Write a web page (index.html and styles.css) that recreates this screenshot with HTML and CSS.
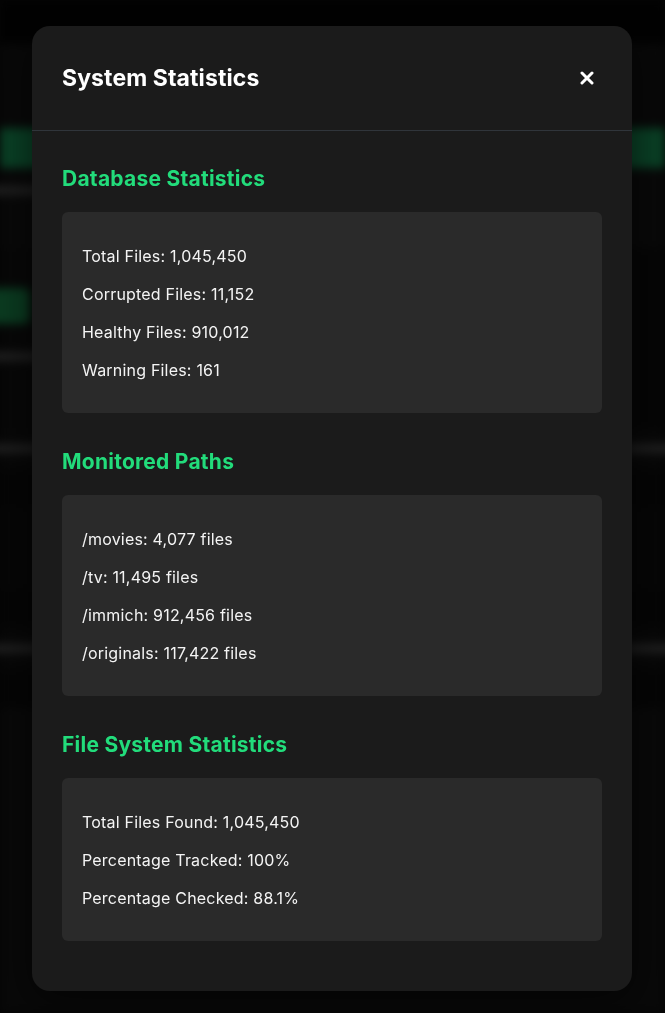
FILE: index.html
```html
<!DOCTYPE html>
<html lang="en">
<head>
<meta charset="utf-8">
<title>System Statistics</title>
<link rel="stylesheet" href="styles.css">
</head>
<body>
<div class="backdrop-page" aria-hidden="true">
  <div class="topbar"></div>
  <div class="band"></div>
  <div class="action-btn"></div>
  <div class="sub-area"><span class="ghost-line w120"></span></div>
  <div class="cards">
    <div class="card">
      <span class="ghost-num"></span>
      <span class="ghost-line w80"></span>
    </div>
    <div class="card dark"></div>
  </div>
  <div class="rows">
    <div class="row"><span class="ghost-line w60"></span><span class="ghost-line w60 right"></span></div>
    <div class="row tall"></div>
    <div class="row"><span class="ghost-line w60"></span><span class="ghost-line w60 right"></span></div>
  </div>
</div>
<div class="overlay"></div>

<div class="modal" role="dialog" aria-labelledby="modal-title">
  <header class="modal-header">
    <h2 id="modal-title" class="modal-title">System Statistics</h2>
    <button class="close-btn" aria-label="Close">
      <svg width="14" height="14" viewBox="0 0 14 14"><path d="M2 2 L12 12 M12 2 L2 12" stroke="#fff" stroke-width="3" stroke-linecap="round"/></svg>
    </button>
  </header>
  <div class="modal-body">
    <section class="stat-section">
      <h3 class="section-title">Database Statistics</h3>
      <div class="stat-box">
        <p>Total Files: 1,045,450</p>
        <p>Corrupted Files: 11,152</p>
        <p>Healthy Files: 910,012</p>
        <p>Warning Files: 161</p>
      </div>
    </section>
    <section class="stat-section">
      <h3 class="section-title">Monitored Paths</h3>
      <div class="stat-box">
        <p>/movies: 4,077 files</p>
        <p>/tv: 11,495 files</p>
        <p>/immich: 912,456 files</p>
        <p>/originals: 117,422 files</p>
      </div>
    </section>
    <section class="stat-section">
      <h3 class="section-title">File System Statistics</h3>
      <div class="stat-box">
        <p>Total Files Found: 1,045,450</p>
        <p>Percentage Tracked: 100%</p>
        <p>Percentage Checked: 88.1%</p>
      </div>
    </section>
  </div>
</div>
</body>
</html>
```

FILE: styles.css
```css
* { box-sizing: border-box; }

html, body {
  margin: 0;
  padding: 0;
  height: 100%;
  background: #0c0c0c;
  font-family: Inter, "Noto Sans", "Liberation Sans", sans-serif;
  overflow: hidden;
}

/* Blurred dashboard behind the dialog */
.backdrop-page {
  filter: blur(5px);
  display: flex;
  flex-direction: column;
  height: 100%;
  background: #171717;
}
.topbar { height: 44px; background: #050505; }
.band { height: 84px; background: #161616; }
.action-btn { height: 40px; background: #1aa862; }
.sub-area {
  height: 80px;
  padding: 18px 0 0 0;
  display: flex;
  align-items: flex-start;
}
.ghost-line {
  display: block;
  height: 9px;
  border-radius: 4px;
  background: #555;
}
.w120 { width: 120px; margin-left: -60px; }
.w80 { width: 80px; margin-left: -40px; margin-top: 28px; }
.w60 { width: 60px; margin-left: -20px; }
.cards {
  display: grid;
  grid-template-columns: 1fr 1fr;
  height: 180px;
}
.card {
  background: #141414;
  padding: 40px 0 0 0;
  display: flex;
  flex-direction: column;
}
.card.dark { background: #0f0f0f; }
.ghost-num {
  display: block;
  width: 60px;
  height: 36px;
  margin-left: -30px;
  border-radius: 6px;
  background: #1c9a55;
}
.rows { display: flex; flex-direction: column; }
.row {
  height: 80px;
  display: flex;
  justify-content: space-between;
  align-items: center;
  background: #151515;
  border-bottom: 40px solid #0e0e0e;
}
.row.tall { height: 120px; background: #111; }
.right { margin-left: 0; margin-right: -20px; }

.overlay {
  position: fixed;
  inset: 0;
  background: rgba(0, 0, 0, 0.62);
}

/* Dialog */
.modal {
  position: fixed;
  left: 32px;
  top: 26px;
  width: 600px;
  background: #1b1b1b;
  border-radius: 18px;
  box-shadow: 0 10px 40px rgba(0,0,0,0.6);
  color: #f2f2f2;
}
.modal-header {
  height: 105px;
  display: flex;
  align-items: center;
  justify-content: space-between;
  padding: 0 38px 0 30px;
  border-bottom: 1px solid #30353b;
}
.modal-title {
  margin: 0;
  font-size: 23px;
  font-weight: 700;
  line-height: 28px;
  letter-spacing: 0.1px;
  color: #ffffff;
}
.close-btn {
  background: none;
  border: 0;
  padding: 0;
  width: 14px;
  height: 14px;
  display: flex;
  cursor: pointer;
}
.modal-body {
  padding: 36px 30px 50px;
  display: flex;
  flex-direction: column;
  gap: 37px;
}
.section-title {
  margin: 0 0 21px;
  font-size: 21px;
  line-height: 24px;
  font-weight: 700;
  letter-spacing: 0.25px;
  color: #22dc7b;
}
.stat-box {
  background: #2a2a2a;
  border-radius: 6px;
  padding: 33px 20px 32px;
  display: flex;
  flex-direction: column;
  gap: 16px;
}
.stat-box p {
  margin: 0;
  font-size: 16px;
  line-height: 22px;
  letter-spacing: 0.2px;
  color: #f4f4f4;
}
```
